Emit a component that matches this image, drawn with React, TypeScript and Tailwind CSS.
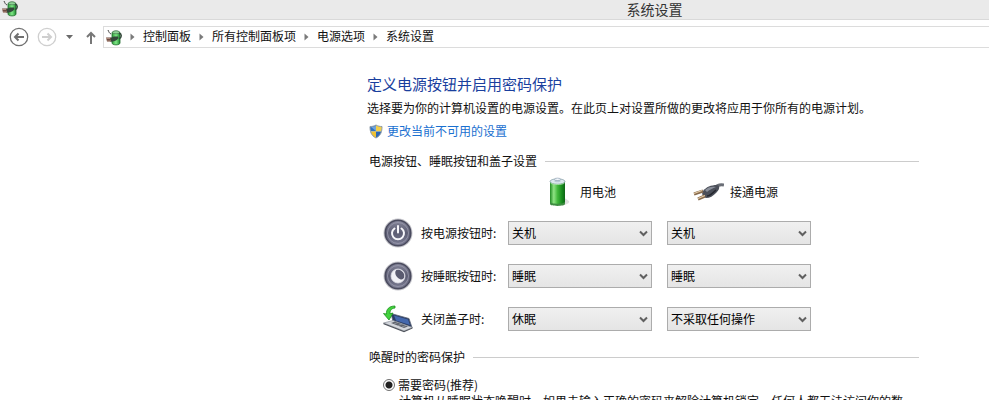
import { Fragment, ReactNode } from "react";

function PowerOptionsIcon() {
  return (
    <svg width="16" height="17" viewBox="0 0 16 17" aria-hidden="true">
      <defs>
        <linearGradient id="cell" x1="0" x2="1">
          <stop offset="0" stopColor="#2f9a3a" />
          <stop offset="0.5" stopColor="#7fe886" />
          <stop offset="1" stopColor="#1f8a30" />
        </linearGradient>
      </defs>
      <path d="M6 4c0-2.500 8-2.500 8 0v10c0 2.500-8 2.500-8 0z" fill="url(#cell)" stroke="#1d6a2a" strokeWidth="0.8" />
      <ellipse cx="10" cy="3.300" rx="3.500" ry="1.500" fill="#8fd396" stroke="#3d6a45" strokeWidth="0.6" />
      <path d="M2 1c1 2 1 3 3 4" fill="none" stroke="#444444" strokeWidth="1" />
      <path d="M13 4c3 1 3 4 0 6" fill="none" stroke="#33483a" strokeWidth="1.500" />
      <path d="M4 9l4-1.500h4c1 1 0 3-2 4-2 1-4 1.500-6 1z" fill="#33483a" />
      <path d="M0 8.500h5v4H1z" fill="#6d4c42" />
      <path d="M0 9.500h4M1 12h4" stroke="#c09a8c" strokeWidth="0.8" />
    </svg>
  );
}

function ArrowCircle({ color, flip }: { color: string; flip?: boolean }) {
  return (
    <svg width="20" height="20" viewBox="0 0 20 20" fill="none" stroke={color} aria-hidden="true">
      <circle cx="10" cy="10" r="8.700" strokeWidth="1.300" />
      <path
        d={flip ? "M5 10h9M10.500 6.500L14 10l-3.500 3.500" : "M15 10H6M9.500 6.500L6 10l3.500 3.500"}
        strokeWidth="2"
      />
    </svg>
  );
}

function Separator() {
  return (
    <svg width="5" height="8" viewBox="0 0 5 8" aria-hidden="true">
      <path d="M0.500 0.500L4.500 4l-4 3.500z" fill="#7a7a7a" />
    </svg>
  );
}

function ShieldIcon() {
  return (
    <svg width="14" height="15" viewBox="0 0 14 15" aria-hidden="true">
      <clipPath id="shield">
        <path d="M7 1C5 2.300 3 2.500 1 2.500c0 5 1 9 6 11.500 5-2.500 6-6.500 6-11.500-2 0-4-.2-6-1.500z" />
      </clipPath>
      <g clipPath="url(#shield)">
        <path d="M0 0h7v7.500H0z" fill="#2f72c0" />
        <path d="M7 0h7v7.500H7z" fill="#f4d04a" />
        <path d="M0 7.500h7V15H0z" fill="#efc132" />
        <path d="M7 7.500h7V15H7z" fill="#2b67b4" />
        <path d="M2 3l5-1v5z" fill="#8dbbe8" opacity="0.7" />
      </g>
      <path
        d="M7 1C5 2.300 3 2.500 1 2.500c0 5 1 9 6 11.500 5-2.500 6-6.500 6-11.500-2 0-4-.2-6-1.500z"
        fill="none"
        stroke="#8d9ba8"
        strokeWidth="1"
      />
    </svg>
  );
}

function BatteryIcon() {
  return (
    <svg width="24" height="30" viewBox="0 0 24 30" aria-hidden="true">
      <defs>
        <linearGradient id="battery" x1="0" x2="1">
          <stop offset="0" stopColor="#1f8a22" />
          <stop offset="0.25" stopColor="#8fe384" />
          <stop offset="0.5" stopColor="#43b83d" />
          <stop offset="0.8" stopColor="#168a1c" />
          <stop offset="1" stopColor="#0e6415" />
        </linearGradient>
      </defs>
      <path d="M17 20l6 4c1 2-3 4-7 4z" fill="#c9c9c9" opacity="0.6" />
      <path d="M4 4v22c0 3 15 3 15 0V4z" fill="url(#battery)" />
      <path d="M4 24.500c0 3 15 3 15 0V27c0 2.500-15 2.500-15 0z" fill="#3f8c42" />
      <ellipse cx="11.500" cy="4.500" rx="7.500" ry="2.700" fill="#dce8ee" stroke="#7f9aa2" strokeWidth="0.7" />
      <path d="M8.500 2.500v2c0 1 6 1 6 0v-2z" fill="#b9c9d6" />
      <ellipse cx="11.500" cy="2.300" rx="3" ry="1.200" fill="#f2f7fc" stroke="#8497aa" strokeWidth="0.6" />
      <path d="M4.500 6c2 2 12 2 14 0" fill="none" stroke="#a9e9a5" strokeWidth="0.8" />
    </svg>
  );
}

function PlugIcon() {
  return (
    <svg width="31" height="20" viewBox="0 0 31 20" aria-hidden="true">
      <path d="M31 3c-4-1-7 0-10 3" fill="none" stroke="#6a6e76" strokeWidth="3" />
      <path d="M10 9c3-4 8-6 14-6 4 1 2 5-1 8-3 3-6 5-10 5-3-1-5-4-3-7z" fill="#4b4f59" />
      <path d="M12 8c3-3 7-4 11-3-3 1-7 3-9 5z" fill="#8b909b" />
      <path d="M14 14c3 0 6-3 9-6" fill="none" stroke="#24272e" strokeWidth="1.500" />
      <path d="M1 12l9-3M5 17l7-3" stroke="#86694b" strokeWidth="3" />
      <path d="M1 11.500l8-3M5 16.500l7-3" stroke="#e3cba7" strokeWidth="1.200" />
    </svg>
  );
}

function RoundIcon({ kind }: { kind: "power" | "sleep" }) {
  const id = `orb-${kind}`;
  return (
    <svg className="shrink-0" width="30" height="30" viewBox="0 0 30 30" aria-hidden="true">
      <defs>
        <linearGradient id={id} x1="0" y1="0" x2="0" y2="1">
          <stop offset="0" stopColor="#85869a" />
          <stop offset="0.5" stopColor="#5c5d73" />
          <stop offset="1" stopColor="#7c7d94" />
        </linearGradient>
      </defs>
      <circle cx="15" cy="15" r="14.500" fill="#c6c6cc" />
      <circle cx="15" cy="15" r="12.800" fill={`url(#${id})`} stroke="#4a4b5e" strokeWidth="1.500" />
      <circle cx="15" cy="15" r="10.500" fill="none" stroke="#9a9bad" strokeWidth="0.8" />
      {kind === "power" ? (
        <g fill="none" stroke="#f7f7fb" strokeWidth="2" strokeLinecap="round">
          <path d="M11.500 10.500a6 6 0 1 0 7 0" />
          <path d="M15 8v6.500" />
        </g>
      ) : (
        <g>
          <circle cx="15" cy="15" r="7" fill="#f1f1f6" />
          <ellipse cx="16.800" cy="13.400" rx="3.800" ry="5.600" transform="rotate(-38 16.800 13.400)" fill="#5a5b70" />
          <circle cx="15" cy="15" r="7" fill="none" stroke="#dcdce4" strokeWidth="0.8" />
        </g>
      )}
    </svg>
  );
}

function LidIcon() {
  return (
    <svg className="shrink-0" width="30" height="28" viewBox="0 0 30 28" aria-hidden="true">
      <path d="M8 8.500l18 5 3 9-19-6z" fill="#2a3c63" stroke="#5d6678" strokeWidth="0.8" />
      <path d="M11 10.500l14 4 2 5.500-14-4.500z" fill="#4468ad" />
      <path d="M0.500 18l9.500-2.500 19.500 7L21 26z" fill="#d3d6dc" stroke="#8b9099" strokeWidth="0.7" />
      <path d="M8 18l4-1.500 13 5-4 1.500z" fill="#60646d" />
      <path d="M11 19l4-1.500M15 20.500l4-1.500M19 22l4-1.500" stroke="#a9aeb8" strokeWidth="0.6" />
      <path d="M0.500 18L21 26v1.300L0.500 19.300zM21 26l8.500-3.500v1L21 27.300z" fill="#50545d" />
      <path
        d="M12 1C6 1 3 4.500 3.500 9L0.500 8.500l5.500 6.500 4-7-3 .8C7 5.500 8 3.500 12 3z"
        fill="#43d23d"
        stroke="#1c9120"
        strokeWidth="0.8"
      />
    </svg>
  );
}

function Choice({ label, value }: { label: string; value: string }) {
  return (
    <div className="relative">
      <select
        aria-label={label}
        defaultValue={value}
        className="block h-6 w-full appearance-none border border-[#acacac] bg-linear-to-b from-[#f0f0f0] to-[#e5e5e5] pl-[3px] pr-5 text-[12px] leading-[22px] text-black"
      >
        <option>{value}</option>
      </select>
      <svg
        className="pointer-events-none absolute right-1 top-2"
        width="9"
        height="8"
        viewBox="0 0 9 8"
        fill="none"
        stroke="#606060"
        strokeWidth="2"
        aria-hidden="true"
      >
        <path d="M1 2.500L4.500 6 8 2.500" />
      </svg>
    </div>
  );
}

function SectionTitle({ children }: { children: ReactNode }) {
  return (
    <div className="flex items-center gap-2 pl-0.5 leading-4">
      <h2>{children}</h2>
      <div className="h-px flex-1 bg-[#cccccc]" />
    </div>
  );
}

const crumbs = ["控制面板", "所有控制面板项", "电源选项", "系统设置"];

const rows = [
  { icon: <RoundIcon kind="power" />, label: "按电源按钮时:", battery: "关机", plugged: "关机" },
  { icon: <RoundIcon kind="sleep" />, label: "按睡眠按钮时:", battery: "睡眠", plugged: "睡眠" },
  { icon: <LidIcon />, label: "关闭盖子时:", battery: "休眠", plugged: "不采取任何操作" },
];

export default function App() {
  return (
    <div className="h-screen overflow-hidden bg-white font-['Noto_Sans_CJK_SC',sans-serif] text-[12px] text-[#111111]">
      <header className="flex h-5 items-start border-b border-[#d9d9d9] bg-[#eaeaea] pl-0.5">
        <PowerOptionsIcon />
        <h1 className="flex-1 pl-[302px] text-center text-[14px] leading-[18px] text-[#333333]">系统设置</h1>
      </header>

      <nav className="flex items-center pl-[9px] pt-1.5">
        <button aria-label="后退">
          <ArrowCircle color="#707070" />
        </button>
        <button aria-label="前进" className="ml-2">
          <ArrowCircle color="#cfcfcf" flip />
        </button>
        <button aria-label="最近的位置" className="ml-2">
          <svg width="9" height="6" viewBox="0 0 9 6" aria-hidden="true">
            <path d="M1 1h7L4.500 5z" fill="#6a6a6a" />
          </svg>
        </button>
        <button aria-label="上移" className="ml-3">
          <svg width="10" height="13" viewBox="0 0 10 13" fill="none" stroke="#777777" strokeWidth="2" aria-hidden="true">
            <path d="M5 13V2M1 6l4-4 4 4" />
          </svg>
        </button>
        <div className="ml-[7px] flex h-[22px] flex-1 items-center border-y border-l border-[#dcdcdc] pl-0.5">
          <PowerOptionsIcon />
          <ol className="flex items-center gap-2 pl-2">
            {crumbs.map((crumb) => (
              <Fragment key={crumb}>
                <li aria-hidden="true">
                  <Separator />
                </li>
                <li>
                  <a href="#" className="block pb-0.5 leading-[18px]">{crumb}</a>
                </li>
              </Fragment>
            ))}
          </ol>
        </div>
      </nav>

      <main className="ml-[367px] mr-[70px] pt-[26px]">
        <h2 className="text-[15px] leading-5 text-[#1a3f9e]">定义电源按钮并启用密码保护</h2>
        <p className="mt-1 whitespace-nowrap leading-5">
          选择要为你的计算机设置的电源设置。在此页上对设置所做的更改将应用于你所有的电源计划。
        </p>
        <a href="#" className="mt-[3px] flex items-center gap-1 pl-0.5 leading-5 text-[#1a70d0]">
          <ShieldIcon />
          更改当前不可用的设置
        </a>

        <div className="mt-3">
          <SectionTitle>电源按钮、睡眠按钮和盖子设置</SectionTitle>
        </div>

        <div className="grid grid-cols-[110px_144px_144px] items-center gap-x-[15px] pl-4">
          <div />
          <div className="mb-0.5 mt-1.5 flex h-[34px] items-center gap-2.5 pl-[38px]">
            <BatteryIcon />
            用电池
          </div>
          <div className="mb-0.5 mt-1.5 flex h-[34px] items-center gap-1.5 pl-[26px]">
            <PlugIcon />
            接通电源
          </div>
          {rows.map((row) => (
            <Fragment key={row.label}>
              <div className="flex h-[43px] items-center gap-2 whitespace-nowrap">
                {row.icon}
                {row.label}
              </div>
              <Choice label={`${row.label} 用电池`} value={row.battery} />
              <Choice label={`${row.label} 接通电源`} value={row.plugged} />
            </Fragment>
          ))}
        </div>

        <div className="mt-[9px]">
          <SectionTitle>唤醒时的密码保护</SectionTitle>
        </div>

        <div className="pl-4 pt-2.5">
          <label className="flex items-center gap-[3px] leading-5">
            <input
              type="radio"
              name="wake"
              defaultChecked
              className="size-3 appearance-none rounded-full border border-[#707070] bg-white checked:bg-[radial-gradient(circle,#222222_3px,transparent_4px)]"
            />
            需要密码(推荐)
          </label>
          <p className="whitespace-nowrap pl-4 leading-3">
            计算机从睡眠状态唤醒时，如果未输入正确的密码来解除计算机锁定，任何人都无法访问你的数
          </p>
        </div>
      </main>
    </div>
  );
}
